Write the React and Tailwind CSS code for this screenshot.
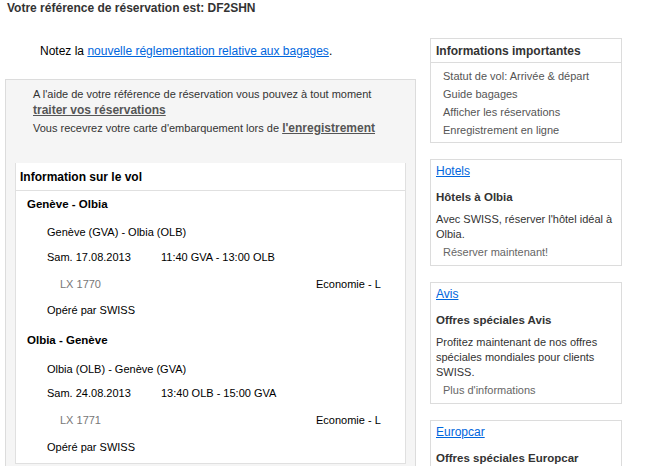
const sans = { fontFamily: '"Liberation Sans", Arial, sans-serif' };

function Segment({ title, route, date, time, flight, first }) {
  return (
    <div>
      <div className={`${first ? "mt-[6px]" : "mt-[16px]"} pl-[11px] font-bold text-[11.5px] leading-[14px]`}>{title}</div>
      <div className={`${first ? "mt-[14px]" : "mt-[15px]"} pl-[31px] leading-[14px]`}>{route}</div>
      <div className={`${first ? "mt-[11px]" : "mt-[10px]"} pl-[31px] leading-[14px] flex`}>
        <span className="w-[114px]">{date}</span>
        <span>{time}</span>
      </div>
      <div className="mt-[13px] pl-[44px] leading-[14px] flex">
        <span className="w-[256px] text-[#777]">{flight}</span>
        <span>Economie - L</span>
      </div>
      <div className={`${first ? "mt-[12px]" : "mt-[13px]"} pl-[31px] leading-[14px]`}>Opéré par SWISS</div>
    </div>
  );
}

function SideBox({ link, title, children, action }) {
  return (
    <div className="border border-[#dcdcdc] px-[5px] pt-[4px] pb-[5px] mt-[16px]">
      <a href="#" className="block text-[12px] text-[#0066dd] underline leading-[14px]">{link}</a>
      <div className="mt-[12px] font-bold text-[11.5px] text-[#333] leading-[14px]">{title}</div>
      <div className="mt-[8px] text-[#333] leading-[15px]">{children}</div>
      {action && <div className="mt-[3px] pl-[7px] text-[#666] leading-[15px]">{action}</div>}
    </div>
  );
}

export default function App() {
  return (
    <div className="w-[670px] h-[466px] overflow-hidden bg-white text-[11px] text-black" style={sans}>
      <div className="pl-[7px] pt-[1px] font-bold text-[12px] text-[#333] leading-[14px]">
        Votre référence de réservation est: DF2SHN
      </div>

      <div className="flex">
        {/* left column */}
        <div className="ml-[5px] w-[411px]">
          <div className="pl-[35px] mt-[28px] text-[12px] leading-[16px]">
            Notez la{" "}
            <a href="#" className="text-[#0066dd] underline">nouvelle réglementation relative aux bagages</a>.
          </div>

          <div className="mt-[20px] border border-[#dcdcdc] bg-[#f5f5f5] pt-[6px] px-[9px] h-[400px]">
            <div className="pl-[18px] text-[#333] leading-[16px]">
              <div>A l'aide de votre référence de réservation vous pouvez à tout moment</div>
              <a href="#" className="block font-bold text-[12px] underline text-[#555]">traiter vos réservations</a>
              <div className="mt-[2px]">
                Vous recevrez votre carte d'embarquement lors de{" "}
                <a href="#" className="font-bold text-[12px] underline text-[#555]">l'enregistrement</a>
              </div>
            </div>

            <div className="mt-[27px] bg-white border-x border-b border-[#e0e0e0] pb-[9px]">
              <div className="h-[28px] flex items-center pl-[4px] font-bold text-[12px] border-b border-[#e0e0e0]">
                Information sur le vol
              </div>
              <Segment first title="Genève - Olbia" route="Genève (GVA) - Olbia (OLB)" date="Sam. 17.08.2013" time="11:40 GVA - 13:00 OLB" flight="LX 1770" />
              <Segment title="Olbia - Genève" route="Olbia (OLB) - Genève (GVA)" date="Sam. 24.08.2013" time="13:40 OLB - 15:00 GVA" flight="LX 1771" />
            </div>
          </div>
        </div>

        {/* right column */}
        <div className="ml-[14px] w-[192px] mt-[23px]">
          <div className="border border-[#dcdcdc]">
            <div className="h-[24px] flex items-center px-[5px] font-bold text-[12px] text-[#333] border-b border-[#dcdcdc]">
              Informations importantes
            </div>
            <div className="pt-[4px] pb-[3px] pl-[12px] text-[#555] leading-[18px]">
              <div>Statut de vol: Arrivée &amp; départ</div>
              <div>Guide bagages</div>
              <div>Afficher les réservations</div>
              <div>Enregistrement en ligne</div>
            </div>
          </div>

          <SideBox link="Hotels" title="Hôtels à Olbia" action="Réserver maintenant!">
            Avec SWISS, réserver l'hôtel idéal à Olbia.
          </SideBox>

          <SideBox link="Avis" title="Offres spéciales Avis" action="Plus d'informations">
            Profitez maintenant de nos offres spéciales mondiales pour clients SWISS.
          </SideBox>

          <SideBox link="Europcar" title="Offres spéciales Europcar">
            Louez une voiture Europcar.
          </SideBox>
        </div>
      </div>
    </div>
  );
}
